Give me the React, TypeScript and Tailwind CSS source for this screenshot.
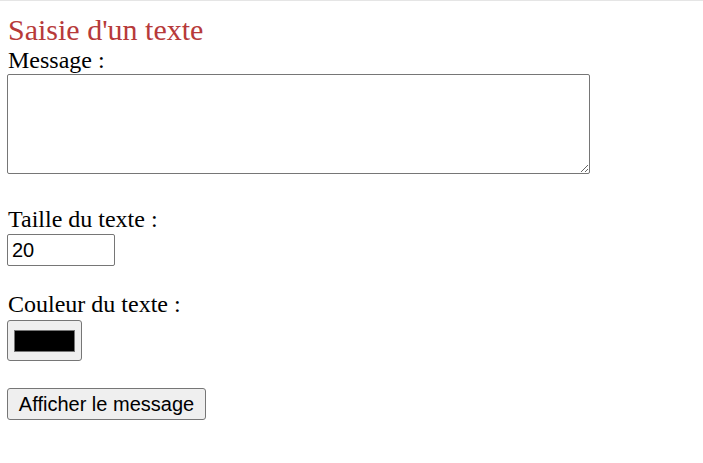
import React from 'react';

export default function App() {
  return (
    <div className="min-h-[463px] w-full border-t border-[#e5e5e5] bg-white px-2 pt-[12px] font-['Liberation_Serif',serif] text-black">
      <h1 className="text-[30px] leading-[34px] font-normal text-[#b73a3a]">Saisie d'un texte</h1>
      <label className="block text-[24px] leading-[27px]">Message :</label>
      <textarea className="block h-[100px] w-[583px] -ml-px rounded-[2px] border border-[#767676] bg-white p-[2px] font-['Liberation_Mono',monospace] text-[13px]" />

      <label className="mt-[32px] block text-[24px] leading-[27px]">Taille du texte :</label>
      <input
        type="text"
        defaultValue="20"
        className="mt-px block h-[32px] w-[108px] -ml-px rounded-[2px] border border-[#767676] bg-white px-[4px] font-['Liberation_Sans',sans-serif] text-[20px] leading-none outline-none"
      />

      <label className="mt-[25px] block text-[24px] leading-[27px]">Couleur du texte :</label>
      <button className="mt-[2px] flex h-[41px] w-[75px] -ml-px items-center justify-center rounded-[3px] border border-[#767676] bg-[#efefef]">
        <span className="block h-[22px] w-[61px] border border-[#767676] bg-black" />
      </button>

      <button className="mt-[27px] block h-[32px] w-[199px] -ml-px rounded-[3px] border border-[#767676] bg-[#efefef] font-['Liberation_Sans',sans-serif] text-[20px] leading-none">
        Afficher le message
      </button>
    </div>
  );
}
